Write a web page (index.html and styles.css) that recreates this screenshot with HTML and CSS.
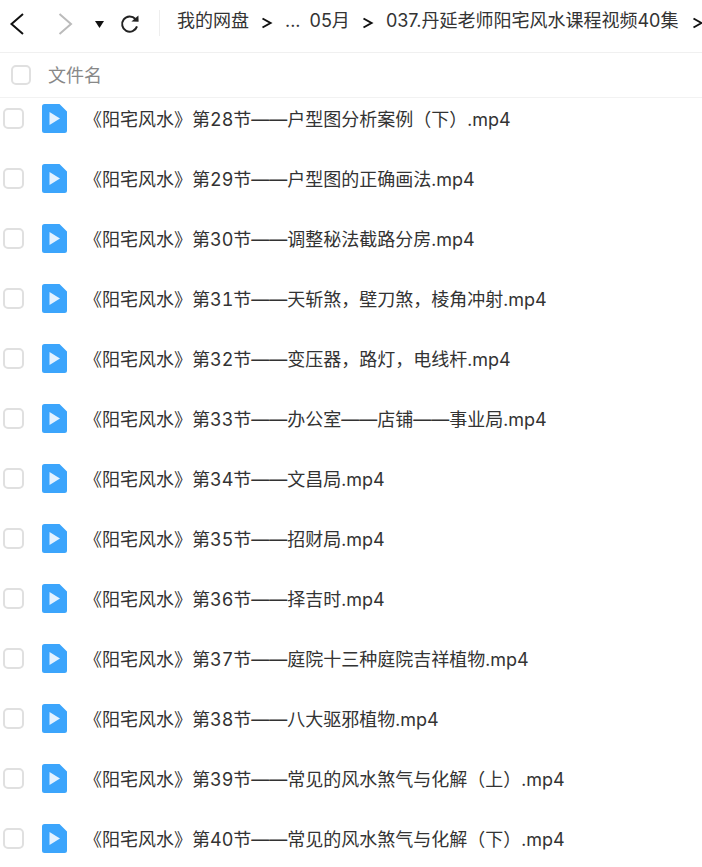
FILE: index.html
```html
<!DOCTYPE html>
<html lang="zh-CN">
<head>
    <meta charset="UTF-8">
    <meta name="viewport" content="width=device-width, initial-scale=1.0">
    <title>我的网盘</title>
    <link rel="stylesheet" href="styles.css">
</head>
<body>
    <svg class="defs" width="0" height="0">
        <symbol id="video-file" viewBox="0 0 25 29">
            <path class="sheet" d="M2.5 0 H17.5 L25 7.5 V26.5 A2.5 2.5 0 0 1 22.5 29 H2.5 A2.5 2.5 0 0 1 0 26.5 V2.5 A2.5 2.5 0 0 1 2.5 0 Z" />
            <path class="play" d="M7.5 8 L18 14.5 L7.5 21 Z" />
        </symbol>
        <symbol id="chevron" viewBox="0 0 12 12">
            <path class="chevron-line" d="M1.5 1.5 L9.5 6 L1.5 10.5" />
        </symbol>
    </svg>

    <header class="toolbar">
        <div class="nav-buttons">
            <svg class="icon-back" width="16" height="22" viewBox="0 0 16 22"><path d="M14 1 L2.5 11 L14 21" /></svg>
            <svg class="icon-forward" width="16" height="22" viewBox="0 0 16 22"><path d="M2.5 1 L14 11 L2.5 21" /></svg>
            <svg class="icon-drop" width="9" height="7" viewBox="0 0 9 7"><path d="M0 0 H9 L4.5 7 Z" /></svg>
            <svg class="icon-refresh" width="20" height="20" viewBox="0 0 20 20"><path class="ring" d="M15.4 5 A7.6 7.6 0 1 0 17 12.4" /><path class="tip" d="M11.4 7.6 L18.6 7.8 L18.4 1.4 Z" /></svg>
        </div>
        <nav class="crumbs">
            <span>我的网盘</span>
            <svg class="sep" width="12" height="12"><use href="#chevron" /></svg>
            <span class="dots">...</span>
            <span class="month">05月</span>
            <svg class="sep" width="12" height="12"><use href="#chevron" /></svg>
            <span>037.丹延老师阳宅风水课程视频40集</span>
            <svg class="sep" width="12" height="12"><use href="#chevron" /></svg>
        </nav>
    </header>

    <div class="list-head">
        <span class="check"></span>
        <span class="head-name">文件名</span>
    </div>

    <ul class="file-list">
        <li class="file-row"><span class="check"></span><svg class="file-icon" width="25" height="29"><use href="#video-file" /></svg><span class="file-name">《阳宅风水》第28节——户型图分析案例（下）.mp4</span></li>
        <li class="file-row"><span class="check"></span><svg class="file-icon" width="25" height="29"><use href="#video-file" /></svg><span class="file-name">《阳宅风水》第29节——户型图的正确画法.mp4</span></li>
        <li class="file-row"><span class="check"></span><svg class="file-icon" width="25" height="29"><use href="#video-file" /></svg><span class="file-name">《阳宅风水》第30节——调整秘法截路分房.mp4</span></li>
        <li class="file-row"><span class="check"></span><svg class="file-icon" width="25" height="29"><use href="#video-file" /></svg><span class="file-name">《阳宅风水》第31节——天斩煞，壁刀煞，棱角冲射.mp4</span></li>
        <li class="file-row"><span class="check"></span><svg class="file-icon" width="25" height="29"><use href="#video-file" /></svg><span class="file-name">《阳宅风水》第32节——变压器，路灯，电线杆.mp4</span></li>
        <li class="file-row"><span class="check"></span><svg class="file-icon" width="25" height="29"><use href="#video-file" /></svg><span class="file-name">《阳宅风水》第33节——办公室——店铺——事业局.mp4</span></li>
        <li class="file-row"><span class="check"></span><svg class="file-icon" width="25" height="29"><use href="#video-file" /></svg><span class="file-name">《阳宅风水》第34节——文昌局.mp4</span></li>
        <li class="file-row"><span class="check"></span><svg class="file-icon" width="25" height="29"><use href="#video-file" /></svg><span class="file-name">《阳宅风水》第35节——招财局.mp4</span></li>
        <li class="file-row"><span class="check"></span><svg class="file-icon" width="25" height="29"><use href="#video-file" /></svg><span class="file-name">《阳宅风水》第36节——择吉时.mp4</span></li>
        <li class="file-row"><span class="check"></span><svg class="file-icon" width="25" height="29"><use href="#video-file" /></svg><span class="file-name">《阳宅风水》第37节——庭院十三种庭院吉祥植物.mp4</span></li>
        <li class="file-row"><span class="check"></span><svg class="file-icon" width="25" height="29"><use href="#video-file" /></svg><span class="file-name">《阳宅风水》第38节——八大驱邪植物.mp4</span></li>
        <li class="file-row"><span class="check"></span><svg class="file-icon" width="25" height="29"><use href="#video-file" /></svg><span class="file-name">《阳宅风水》第39节——常见的风水煞气与化解（上）.mp4</span></li>
        <li class="file-row"><span class="check"></span><svg class="file-icon" width="25" height="29"><use href="#video-file" /></svg><span class="file-name">《阳宅风水》第40节——常见的风水煞气与化解（下）.mp4</span></li>
    </ul>
</body>
</html>
```

FILE: styles.css
```css
html, body {
    height: 867px;
    overflow: hidden;
}

body {
    margin: 0;
    padding: 0;
    background: #fff;
    color: #333;
    font-family: Inter, "Noto Sans CJK SC", sans-serif;
    font-size: 18px;
    font-variant-numeric: tabular-nums;
}

.defs {
    display: block;
}

.toolbar {
    display: flex;
    align-items: center;
    height: 52px;
    padding-left: 9px;
    border-bottom: 1px solid #f0f0f0;
    white-space: nowrap;
    overflow: hidden;
}

.nav-buttons {
    display: flex;
    align-items: center;
    height: 26px;
    width: 151px;
    flex: none;
    border-right: 1px solid #eee;
    margin: 0 17px 7px 0;
    box-sizing: border-box;
}

.nav-buttons svg {
    margin-top: 3px;
}

.icon-back path,
.icon-forward path {
    fill: none;
    stroke-width: 2;
}

.icon-back path {
    stroke: #111;
}

.icon-forward {
    margin-left: 32px;
}

.icon-forward path {
    stroke: #bbb;
}

.icon-drop {
    margin-left: 22px;
}

.icon-drop path {
    fill: #111;
}

.icon-refresh {
    margin-left: 16px;
}

.ring {
    fill: none;
    stroke: #222;
    stroke-width: 2;
}

.tip {
    fill: #222;
}

.crumbs {
    display: flex;
    align-items: center;
    line-height: 24px;
    margin-bottom: 11px;
    font-variant-numeric: normal;
}

.sep {
    flex: none;
    margin: 5px 12px 0 12px;
}

.sep:last-child {
    margin-left: 14px;
}

.chevron-line {
    fill: none;
    stroke: #111;
    stroke-width: 2;
}

.dots {
    margin-right: 9px;
}

.list-head {
    display: flex;
    align-items: center;
    height: 44px;
    padding-left: 11px;
    border-bottom: 1px solid #f2f2f2;
}

.list-head .check {
    width: 20px;
    height: 20px;
}

.head-name {
    margin-left: 17px;
    margin-bottom: 2px;
    color: #888;
}

.check {
    display: block;
    flex: none;
    box-sizing: border-box;
    width: 21px;
    height: 21px;
    border: 2px solid #e0e0e0;
    border-radius: 5px;
    background: #fff;
}

.file-list {
    margin: -10px 0 0;
    padding: 0;
    list-style: none;
}

.file-row {
    display: flex;
    align-items: center;
    height: 60px;
    padding-left: 3px;
    white-space: nowrap;
}

.file-icon {
    flex: none;
    margin-left: 18px;
}

.sheet {
    fill: #3ca5fc;
}

.play {
    fill: #e4f2ff;
}

.file-name {
    margin-left: 17px;
}
```
